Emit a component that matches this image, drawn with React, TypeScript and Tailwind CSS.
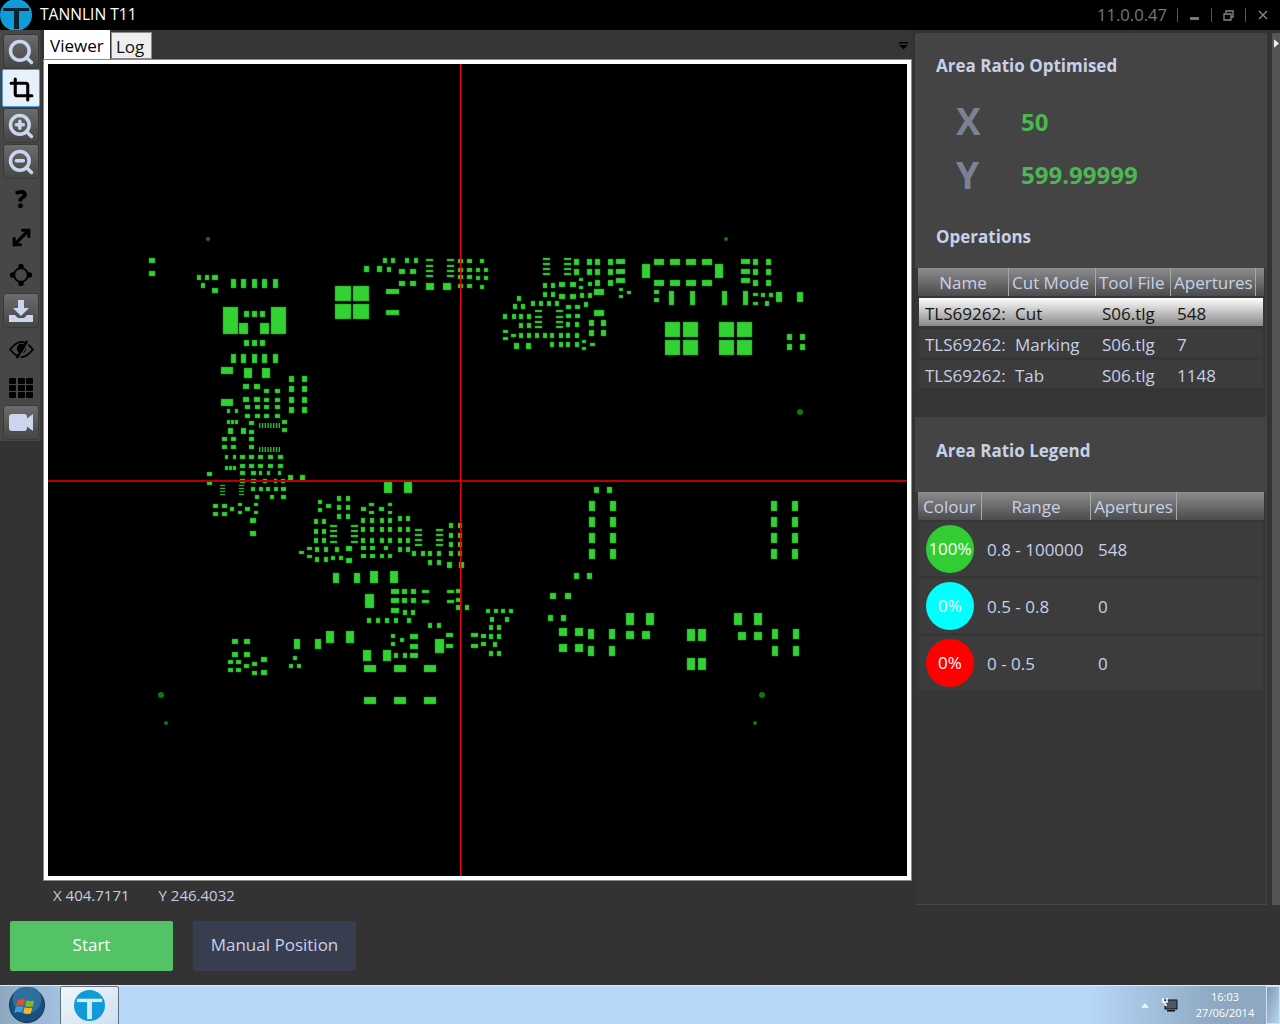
import React from "react";
import { Search, ZoomIn, ZoomOut, Crop, MoveDiagonal } from "lucide-react";

// [xs, ys, w, h] - every x is paired with every y. Coordinates are the board view's own.
type Pads = [number[], number[], number, number];

const BOARD: Pads[] = [
  [[149], [258, 271], 6, 5],
  [[197, 205], [275], 4, 5],
  [[212], [275, 288], 6, 5],
  [[201], [283], 4, 5],
  [[231, 241, 252, 262, 273], [279, 354], 5, 9],
  [[223, 271], [307], 15, 27],
  [[239, 260], [323], 9, 11],
  [[244, 252, 260], [311, 340], 5, 6],
  [[221], [367, 399], 12, 7],
  [[244, 262], [368], 8, 10],
  [[289, 302], [376, 386, 397, 407], 5, 6],
  [[243, 254], [384, 397], 6, 5],
  [[264, 275], [389, 398, 405, 414], 5, 4],
  [[245, 255], [405, 414], 5, 4],
  [[227, 235], [409], 3, 4],
  [[227, 231, 235], [420], 3, 4],
  [[228, 241], [428], 5, 6],
  [[249], [421, 430, 437, 445], 5, 4],
  [[282], [420, 428], 5, 4],
  [[222, 231], [437, 445], 5, 4],
  [[225, 233], [455], 3, 4],
  [[225, 229, 233], [466], 3, 4],
  [[240, 249, 258, 268, 278], [455, 464], 5, 4],
  [[240, 251], [471], 5, 4],
  [[259, 267, 278], [471], 3, 4],
  [[240, 251], [479], 5, 4],
  [[263, 281], [479], 4, 4],
  [[274], [479], 3, 4],
  [[207], [472, 481], 5, 4],
  [[288, 300], [475], 5, 6],
  [[220, 239], [485, 488, 491, 494], 5, 1],
  [[251, 259, 266, 274], [487], 4, 4],
  [[281], [487, 495], 5, 4],
  [[255, 270], [495], 4, 4],
  [[213, 222], [504, 512], 5, 4],
  [[230], [507], 4, 4],
  [[238, 254], [503, 511], 4, 3],
  [[245], [507], 5, 4],
  [[250], [518, 531], 6, 5],
  [[318], [500, 508], 4, 4],
  [[326], [504], 5, 4],
  [[337, 346], [496, 505, 514], 4, 5],
  [[361, 379], [507], 5, 4],
  [[369], [503, 511], 5, 3],
  [[388], [503, 511], 4, 3],
  [[361, 370, 380, 388], [518, 527, 538], 4, 5],
  [[361, 370], [546, 554], 5, 4],
  [[384], [546], 4, 4],
  [[380, 388], [554], 4, 4],
  [[314, 322], [519, 529, 538], 4, 5],
  [[330, 351], [525, 530, 535, 541], 7, 2],
  [[299], [551], 5, 3],
  [[307], [547, 555], 5, 3],
  [[315, 324], [547, 557], 4, 5],
  [[335], [547], 4, 5],
  [[331, 339], [556], 4, 4],
  [[346], [546, 558], 6, 5],
  [[398, 406], [516, 527, 538, 547], 4, 5],
  [[415, 436], [529, 534, 539, 544], 7, 2],
  [[449, 458], [523, 533, 542, 551], 4, 5],
  [[412, 421, 428, 437], [551], 4, 5],
  [[428, 437], [560], 4, 5],
  [[447, 459], [562], 5, 6],
  [[333, 354], [573], 6, 10],
  [[370, 390], [571], 8, 12],
  [[384, 404], [482], 8, 11],
  [[391], [589, 598, 608], 8, 5],
  [[402, 411], [589, 598], 5, 5],
  [[403, 411], [610], 4, 5],
  [[422, 447], [590, 600], 7, 3],
  [[456], [589, 598], 5, 4],
  [[456], [605], 5, 5],
  [[465], [605], 4, 5],
  [[365], [594], 9, 14],
  [[367, 376, 385, 394, 407], [618], 4, 5],
  [[428, 437], [623], 4, 5],
  [[232, 244], [639, 652], 6, 5],
  [[228, 236], [660, 668], 5, 4],
  [[244], [664], 5, 4],
  [[252], [662, 671], 5, 4],
  [[261], [657, 670], 6, 5],
  [[294, 315], [639], 6, 10],
  [[326, 346], [631], 8, 12],
  [[293], [656], 4, 4],
  [[289, 297], [664], 4, 4],
  [[391], [634, 642], 4, 4],
  [[400], [638], 4, 4],
  [[410], [634, 644, 653], 8, 5],
  [[394, 403], [653], 4, 5],
  [[363, 383], [650], 8, 11],
  [[435], [639], 9, 14],
  [[446, 471], [633, 644], 7, 4],
  [[364, 394, 424], [665, 697], 12, 7],
  [[481], [634, 642], 5, 4],
  [[489, 497], [625, 634, 651], 4, 5],
  [[493], [642], 4, 5],
  [[490, 505], [617], 4, 5],
  [[486, 494, 501, 509], [609], 4, 4],
  // upper middle
  [[335, 353], [286, 304], 16, 15],
  [[386], [289, 310], 13, 5],
  [[364, 377], [266], 5, 6],
  [[387], [267], 4, 5],
  [[383, 391, 405, 414], [258], 4, 5],
  [[399, 410], [269, 281], 6, 5],
  [[426, 447], [259, 265, 270, 275], 7, 2],
  [[426, 443], [283], 8, 7],
  [[458, 467], [259, 268, 275, 284], 5, 4],
  [[480], [259, 285], 4, 4],
  [[476, 484], [268, 276], 4, 4],
  // upper right
  [[543, 564], [258, 263, 268, 273], 7, 2],
  [[574, 587, 595, 608], [259, 269], 5, 6],
  [[595, 608], [280], 5, 6],
  [[616], [259, 269, 278], 9, 5],
  [[594], [289, 310], 10, 6],
  [[619], [288, 295], 4, 3],
  [[627], [291], 4, 3],
  [[543, 551], [283, 292], 4, 5],
  [[559, 570], [282, 294], 6, 5],
  [[579], [278, 286], 4, 3],
  [[588], [282], 4, 4],
  [[580, 588], [293], 4, 5],
  [[517], [296], 4, 5],
  [[513, 521], [304], 4, 5],
  [[531, 539, 547, 555], [301], 4, 5],
  [[584], [302], 4, 5],
  [[535, 556], [310, 316, 321, 326], 7, 2],
  [[566, 575], [305, 314], 5, 4],
  [[566, 575], [322], 4, 5],
  [[589, 601], [320, 330], 5, 6],
  [[503, 512, 519, 527], [314], 4, 5],
  [[519, 527], [323], 4, 5],
  [[503], [330, 337], 5, 3],
  [[511], [334], 5, 3],
  [[519, 527, 535, 543, 550, 559, 566, 575], [333], 4, 5],
  [[550, 559, 566, 575], [342], 4, 5],
  [[514, 526], [343], 5, 6],
  [[582], [340, 347], 4, 3],
  [[590], [343], 5, 3],
  [[642, 715], [264], 8, 14],
  [[654, 670, 686, 702], [259, 280], 10, 6],
  [[654], [290, 298], 5, 4],
  [[669, 690, 722, 743], [291], 5, 14],
  [[741], [259, 269, 278], 9, 5],
  [[753, 766], [259, 269, 280], 5, 6],
  [[753], [293, 302], 5, 3],
  [[761, 769], [293], 4, 4],
  [[765], [301], 4, 5],
  [[776, 797], [292], 6, 10],
  [[665, 683, 719, 737], [322, 340], 15, 15],
  [[787, 800], [334, 344], 5, 6],
  // lower right
  [[594, 607], [487], 5, 6],
  [[589, 610, 771, 792], [501, 517, 533, 549], 6, 10],
  [[574, 587], [573], 5, 6],
  [[550, 565], [593], 6, 6],
  [[548, 561], [615], 5, 6],
  [[559, 575], [628, 644], 8, 8],
  [[588, 609, 772, 793], [629, 646], 6, 10],
  [[626, 646, 734, 754], [613], 8, 12],
  [[626, 642], [631], 8, 8],
  [[738, 754], [632], 8, 8],
  [[687, 698], [629, 658], 8, 12],
];

const DOTS: [number, number, number][] = [
  [208, 239, 2],
  [726, 239, 2],
  [800, 412, 3],
  [161, 695, 3],
  [166, 723, 2],
  [762, 695, 3],
  [755, 723, 2],
];

const font = "font-['Open_Sans','Noto_Sans',sans-serif]";

function Board() {
  const comb = [0, 1, 2, 3, 4, 5, 6, 7];
  return (
    <svg viewBox="48 64 859 812" className="block w-[859px] h-[812px] bg-black">
      <g fill="#32d232" stroke="#1c8a1c" strokeWidth="0.5">
        {BOARD.map(([xs, ys, w, h], i) =>
          xs.map((x) =>
            ys.map((y) => <rect key={`${i}-${x}-${y}`} x={x} y={y} width={w} height={h} />)
          )
        )}
      </g>
      <g fill="#2cb82c">
        {comb.map((n) => (
          <React.Fragment key={n}>
            <rect x={259 + n * 2.8} y={423} width={1.4} height={5} />
            <rect x={259 + n * 2.8} y={447} width={1.4} height={5} />
          </React.Fragment>
        ))}
      </g>
      <g fill="#0a7a0a">
        {DOTS.map(([x, y, r]) => (
          <circle key={`${x}-${y}`} cx={x} cy={y} r={r} />
        ))}
      </g>
      <rect x="48" y="480" width="859" height="2" fill="#b80000" />
      <rect x="460" y="64" width="1.5" height="812" fill="#e80000" />
    </svg>
  );
}

function TLogo({ size }: { size: number }) {
  return (
    <svg viewBox="0 0 32 32" width={size} height={size} className="block">
      <circle cx="16" cy="16" r="16" fill="#0f9ad8" />
      <path d="M3 9h26v3H3z" fill="#0b2230" />
      <path d="M14 12h5v18h-5z" fill="#0b2230" />
    </svg>
  );
}

function TaskLogo() {
  return (
    <svg viewBox="0 0 32 32" width={31} height={31} className="block">
      <circle cx="16" cy="16" r="16" fill="#0f9ad8" />
      <path d="M3 9h26v3.5H3z" fill="#d8ecf8" />
      <path d="M13.5 12h5v18h-5z" fill="#d8ecf8" />
    </svg>
  );
}

function ToolButton({ children }: { children: React.ReactNode }) {
  return (
    <div className="w-[36px] h-[35px] ml-[3px] rounded-[3px] border border-[#3a3a3a] bg-gradient-to-b from-[#6c6c6c] to-[#454545] flex items-center justify-center shrink-0">
      {children}
    </div>
  );
}

function ToolPlain({ children, h }: { children: React.ReactNode; h: string }) {
  return <div className={`w-[42px] flex items-center justify-center shrink-0 ${h}`}>{children}</div>;
}

function Toolbar() {
  const ic = "#c9d6ee";
  return (
    <div className="w-[42px] h-[411px] bg-[#474747] border-r-2 border-[#3a3a3a] pt-[4px] flex flex-col shrink-0">
      <ToolButton>
        <Search size={28} color={ic} strokeWidth={3} />
      </ToolButton>
      <div className="w-[38px] h-[38px] ml-[2px] border border-[#4a9ce8] bg-[#e6f1fc] rounded-[2px] flex items-center justify-center pt-[2px] shrink-0">
        <Crop size={25} color="#000" strokeWidth={3} />
      </div>
      <div className="h-px shrink-0" />
      <ToolButton>
        <ZoomIn size={28} color={ic} strokeWidth={3} />
      </ToolButton>
      <div className="h-px shrink-0" />
      <ToolButton>
        <ZoomOut size={28} color={ic} strokeWidth={3} />
      </ToolButton>
      <ToolPlain h="h-[38px] mt-px">
        <span className={`${font} text-[24px] font-extrabold text-black leading-none`}>?</span>
      </ToolPlain>
      <ToolPlain h="h-[38px]">
        <MoveDiagonal size={25} color="#000" strokeWidth={3} />
      </ToolPlain>
      <ToolPlain h="h-[37px]">
        <svg viewBox="0 0 24 24" width="22" height="22" fill="none" stroke="#000" strokeWidth="2">
          <circle cx="12" cy="12" r="7.5" />
          <circle cx="12" cy="2.8" r="2" fill="#000" />
          <circle cx="12" cy="21.2" r="2" fill="#000" />
          <circle cx="2.8" cy="12" r="2" fill="#000" />
          <circle cx="21.2" cy="12" r="2" fill="#000" />
        </svg>
      </ToolPlain>
      <ToolButton>
        <svg viewBox="0 0 26 26" width="26" height="26">
          <path d="M10 2h6v8h5l-8 8-8-8h5z" fill={ic} />
          <path d="M1 17h6l3 3h6l3-3h6v7H1z" fill={ic} />
        </svg>
      </ToolButton>
      <ToolPlain h="h-[43px]">
        <svg viewBox="0 0 26 20" width="25" height="19" fill="none" stroke="#000" strokeWidth="2">
          <path d="M1 10c4-5 8-8 12-8s8 3 12 8c-4 5-8 8-12 8s-8-3-12-8z" />
          <circle cx="13" cy="9" r="4" fill="#000" />
          <path d="M19 1 8 19" strokeWidth="2.5" stroke="#000" />
          <path d="M21 2 10 20" strokeWidth="1.5" stroke="#474747" />
        </svg>
      </ToolPlain>
      <ToolPlain h="h-[34px]">
        <div className="grid grid-cols-3 gap-[1.5px] w-[24px]">
          {Array.from({ length: 9 }).map((_, i) => (
            <div key={i} className="h-[5.5px] bg-black rounded-[1px]" />
          ))}
        </div>
      </ToolPlain>
      <ToolButton>
        <svg viewBox="0 0 24 17" width="24" height="17">
          <rect x="0" y="0" width="18" height="17" rx="3" fill={ic} />
          <path d="M16 6l8-6v17l-8-6z" fill={ic} />
        </svg>
      </ToolButton>
    </div>
  );
}

function Viewer() {
  return (
    <div className="flex flex-col w-[867px] ml-[2px]">
      <div className={`${font} flex items-end h-[30px] bg-[#363636]`}>
        <div className="w-[66px] h-[30px] bg-white text-black text-[17px] leading-[32px] pl-[6px]">Viewer</div>
        <div className="w-[41px] h-[27px] ml-px mb-px bg-[#eeeeee] border border-[#8a8a8a] text-[#111] text-[17px] leading-[27px] pl-[4px]">Log</div>
        <div className="flex-1 h-full flex items-center justify-end pr-[3px]">
          <svg viewBox="0 0 9 9" width="9" height="9">
            <path d="M0 1h9v1.5H0z" fill="#000" />
            <path d="M0 4h9L4.500 8.500z" fill="#000" />
          </svg>
        </div>
      </div>
      <div className="border-[4px] border-white outline outline-1 outline-[#8a8a8a]">
        <Board />
      </div>
      <div className={`${font} flex h-[30px] items-center text-[15px] text-[#c3cde0] pl-[9px] gap-[29px]`}>
        <span>X 404.7171</span>
        <span>Y 246.4032</span>
      </div>
    </div>
  );
}

function HeaderCell({ w, children, center }: { w: string; children?: React.ReactNode; center?: boolean }) {
  return (
    <div className={`${w} h-full border-r border-[#a8a8a8] overflow-hidden whitespace-nowrap ${center ? "text-center" : "pl-[3px]"}`}>
      {children}
    </div>
  );
}

const OPS = [
  { name: "TLS69262:", mode: "Cut", file: "S06.tlg", count: "548", active: true },
  { name: "TLS69262:", mode: "Marking", file: "S06.tlg", count: "7", active: false },
  { name: "TLS69262:", mode: "Tab", file: "S06.tlg", count: "1148", active: false },
];

const LEGEND = [
  { pct: "100%", color: "bg-[#32cd32]", range: "0.8 - 100000", count: "548" },
  { pct: "0%", color: "bg-[#00ffff]", range: "0.5 - 0.8", count: "0" },
  { pct: "0%", color: "bg-[#ff0000]", range: "0 - 0.5", count: "0" },
];

function SidePanel() {
  return (
    <div className={`${font} w-[352px] h-[872px] mt-[3px] ml-[4px] bg-[#363636] border-r border-b border-[#454545] text-[#c6d1e8] shrink-0 flex flex-col`}>
      <div className="h-[235px] bg-[#444444] rounded-t-[3px] shrink-0">
        <div className="pl-[21px] pt-[20px] text-[17px] font-bold leading-[26px]">Area Ratio Optimised</div>
        <div className="flex items-center h-[54px] mt-[14px] pl-[41px]">
          <span className="w-[65px] text-[37px] font-bold text-[#7b8294] leading-none">X</span>
          <span className="text-[24px] font-bold text-[#4cb851] pt-[3px]">50</span>
        </div>
        <div className="flex items-center h-[54px] pl-[41px]">
          <span className="w-[65px] text-[37px] font-bold text-[#7b8294] leading-none">Y</span>
          <span className="text-[24px] font-bold text-[#4cb851] pt-[2px]">599.99999</span>
        </div>
        <div className="pl-[21px] pt-[23px] text-[17px] font-bold leading-[26px]">Operations</div>
      </div>
      <div className="h-[149px] shrink-0 bg-[#363636] pl-[3px] pr-[2px]">
        <div className="h-[28px] bg-gradient-to-b from-[#8d8d8d] to-[#4c4c4c] flex text-[17px] leading-[30px] text-[#c6d1e8]">
          <HeaderCell w="w-[91px]" center>Name</HeaderCell>
          <HeaderCell w="w-[87px]">Cut Mode</HeaderCell>
          <HeaderCell w="w-[75px]">Tool File</HeaderCell>
          <HeaderCell w="w-[85px]">Apertures</HeaderCell>
        </div>
        <div className="flex flex-col gap-[3px] mt-[2px] pl-px pr-px">
          {OPS.map((op) => (
            <div
              key={op.mode}
              className={`h-[28px] flex items-center text-[17px] pl-[6px] pt-[4px] ${op.active ? "bg-gradient-to-b from-white to-[#8a8a8a] text-[#151515]" : "bg-[#3c3c3c]"}`}
            >
              <span className="w-[80px] overflow-hidden whitespace-nowrap">{op.name}</span>
              <span className="w-[97px] pl-[10px]">{op.mode}</span>
              <span className="w-[75px]">{op.file}</span>
              <span>{op.count}</span>
            </div>
          ))}
        </div>
      </div>
      <div className="h-[75px] shrink-0 bg-[#444444] pl-[21px] pt-[21px] text-[17px] font-bold leading-[26px]">Area Ratio Legend</div>
      <div className="flex-1 bg-[#363636] pl-[3px] pr-[2px]">
        <div className="h-[28px] bg-gradient-to-b from-[#8d8d8d] to-[#4c4c4c] flex text-[17px] leading-[30px]">
          <HeaderCell w="w-[64px]" center>Colour</HeaderCell>
          <HeaderCell w="w-[109px]" center>Range</HeaderCell>
          <HeaderCell w="w-[86px]" center>Apertures</HeaderCell>
        </div>
        <div className="flex flex-col gap-[3px] mt-[2px] pl-px pr-px">
          {LEGEND.map((row) => (
            <div key={row.range} className="h-[54px] bg-[#3c3c3c] flex items-center text-[17px]">
              <div className={`${row.color} w-[48px] h-[48px] ml-[7px] rounded-full flex items-center justify-center text-white text-[17px]`}>
                {row.pct}
              </div>
              <span className="w-[124px] pl-[13px] pt-[2px] whitespace-nowrap">{row.range}</span>
              <span className="pt-[2px]">{row.count}</span>
            </div>
          ))}
        </div>
      </div>
    </div>
  );
}

function StartOrb() {
  return (
    <svg viewBox="0 0 38 38" width="36" height="36" className="block">
      <circle cx="19" cy="19" r="18.500" fill="#17507f" stroke="#0c2f4d" />
      <circle cx="19" cy="13" r="15" fill="#3f83b5" opacity="0.6" />
      <path d="M9 14q4-2 8-.5l-1.500 6q-4-1.500-8 .5z" fill="#e5502a" />
      <path d="M18.500 14q4 1.500 8 .5l-1.500 6q-4 1-8-.5z" fill="#7fba2d" />
      <path d="M7 21.500q4-2 8-.5l-1.500 6q-4-1.500-8 .5z" fill="#3f9fe0" />
      <path d="M16.500 21.500q4 1.500 8 .5l-1.500 6q-4 1-8-.5z" fill="#f5b81e" />
    </svg>
  );
}

export default function App() {
  return (
    <div className={`${font} w-[1280px] h-[1024px] bg-[#333333] flex flex-col overflow-hidden`}>
      <div className="h-[30px] bg-black flex items-center shrink-0">
        <TLogo size={32} />
        <span className="ml-[8px] text-[15.600px] text-white">TANNLIN T11</span>
        <div className="ml-auto flex items-center h-full text-[#777777]">
          <span className="text-[16.600px]">11.0.0.47</span>
          <div className="w-px h-[14px] bg-[#555] ml-[10px]" />
          <div className="w-[33px] flex justify-center">
            <div className="w-[9px] h-[3px] bg-[#777] mt-[6px]" />
          </div>
          <div className="w-px h-[14px] bg-[#555]" />
          <div className="w-[33px] flex justify-center">
            <svg viewBox="0 0 11 11" width="11" height="11" fill="none" stroke="#888" strokeWidth="1.300">
              <path d="M3 3V1h7v6H8" />
              <path d="M1 4h7v6H1z" />
            </svg>
          </div>
          <div className="w-px h-[14px] bg-[#555]" />
          <div className="w-[34px] flex justify-center">
            <svg viewBox="0 0 10 10" width="10" height="10" stroke="#888" strokeWidth="1.300">
              <path d="M1 1l8 8M9 1l-8 8" />
            </svg>
          </div>
        </div>
      </div>
      <div className="h-[955px] flex shrink-0">
        <div className="w-[911px] flex flex-col shrink-0">
          <div className="flex">
            <Toolbar />
            <Viewer />
          </div>
          <div className="flex gap-[20px] pl-[10px] pt-[11px] text-[17px]">
            <div className="w-[163px] h-[50px] pb-[3px] rounded-[2px] bg-[#53c365] text-white flex items-center justify-center">Start</div>
            <div className="w-[163px] h-[50px] pb-[3px] rounded-[2px] bg-[#393d50] text-[#c6d1e8] flex items-center justify-center">Manual Position</div>
          </div>
        </div>
        <SidePanel />
        <div className="flex-1 ml-[5px] mt-[3px] h-[872px] bg-[#555555] flex justify-center pt-[6px]">
          <svg viewBox="0 0 6 10" width="5" height="9">
            <path d="M0 0l6 5-6 5z" fill="#eee" />
          </svg>
        </div>
      </div>
      <div className="h-[39px] border-t border-[#d9ecfc] bg-gradient-to-r from-[#b8d8f9] from-85% to-[#8ea8c1] to-95% flex items-center">
        <div className="w-[60px] h-full flex items-center pl-[9px] bg-gradient-to-r from-[#8ea8c1] to-[#a3c2e0]">
          <StartOrb />
        </div>
        <div className="w-[59px] h-[39px] border border-[#5d6f80] rounded-[2px] bg-gradient-to-br from-[#f0f6fb] to-[#cfe0ef] flex items-center justify-center">
          <TaskLogo />
        </div>
        <div className="ml-auto flex items-center text-white">
          <svg viewBox="0 0 9 5" width="8" height="5" className="mr-[13px]">
            <path d="M0 5l4.500-5L9 5z" fill="#f3f6fa" />
          </svg>
          <svg viewBox="0 0 16 16" width="16" height="16" className="mr-[17px]">
            <rect x="3" y="3" width="12" height="9" fill="#4a5a68" stroke="#111" />
            <path d="M5 13h8v1.500H5z" fill="#111" />
            <path d="M1 1v4h4V1M3 5v3h2" fill="none" stroke="#fff" strokeWidth="1.500" />
          </svg>
          <div className="w-[60px] text-center text-[11px] leading-[16px]">
            <div>16:03</div>
            <div className="whitespace-nowrap">27/06/2014</div>
          </div>
          <div className="w-[14px] h-[38px] ml-[11px] border border-[#cfe2f2] bg-gradient-to-br from-[#7f99b0] to-[#b9d7f0]" />
        </div>
      </div>
    </div>
  );
}
